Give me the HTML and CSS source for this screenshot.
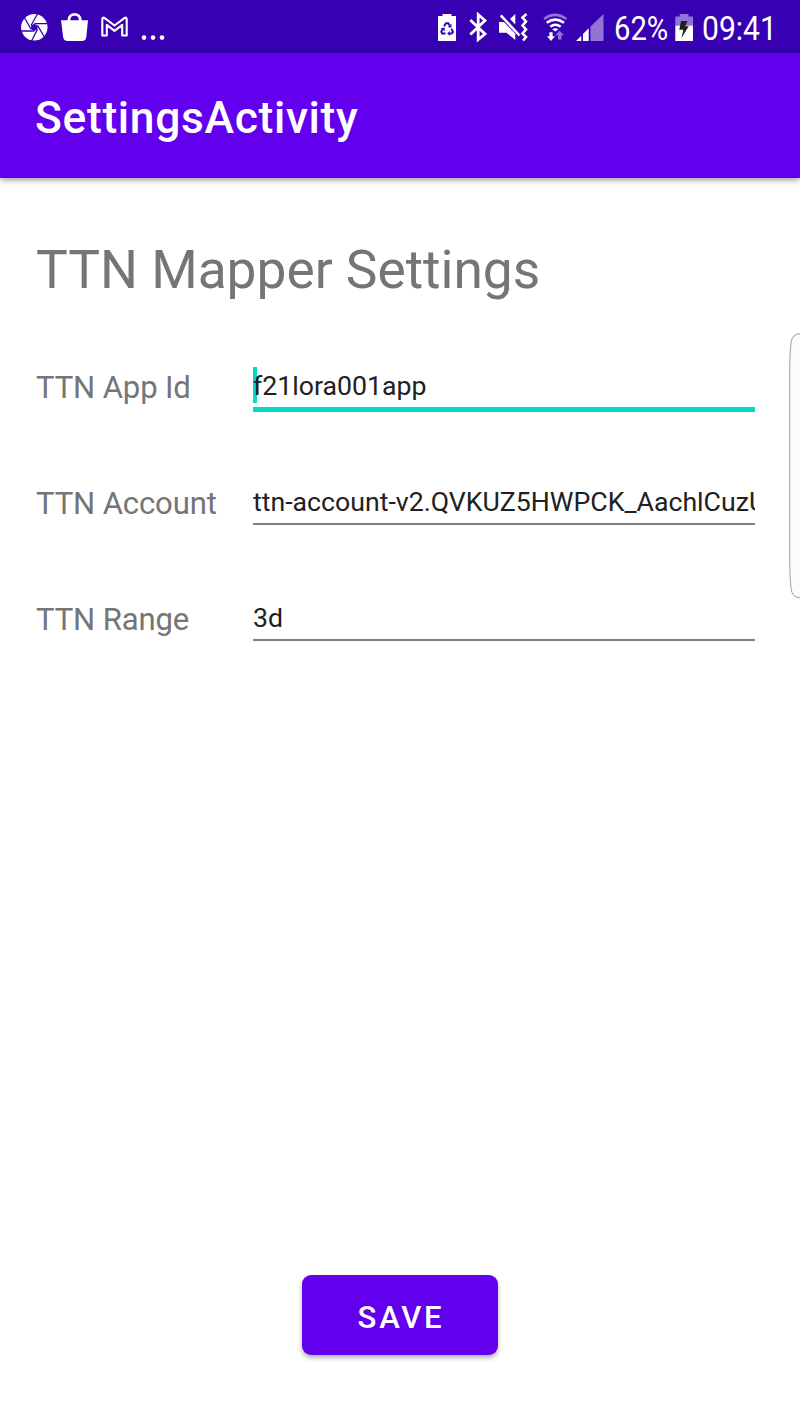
FILE: index.html
```html
<!DOCTYPE html>
<html lang="en">
<head>
<meta charset="utf-8">
<title>SettingsActivity</title>
<link rel="stylesheet" href="styles.css">
</head>
<body>
<div class="screen">
  <header class="status">
    <svg class="tray" width="180" height="53" viewBox="0 0 180 53">
      <circle cx="34.3" cy="27.3" r="13.2" fill="#fff"/>
      <g stroke="#3700b3" stroke-width="1.3" fill="#3700b3">
        <path d="M34.3 23.8L37.5 25.5V29.2L34.3 31L31.1 29.2V25.5Z" stroke="none"/>
        <path d="M31 25.5L38 13M34.3 23.6H48M37.5 25.3L45 38M37.5 29.4L31 42M34.3 31H20M31 29.3L23.5 16"/>
      </g>
      <path d="M61 20.3H88L86.3 37Q85.8 41 82 41H67.5Q63.7 41 63.1 37Z" fill="#fff"/>
      <path d="M69 22V19.5A5.6 5.2 0 0 1 80.2 19.5V22" fill="none" stroke="#fff" stroke-width="2.8"/>
      <path d="M102.3 35.5V19.5Q102.3 16.5 105 18.3L114.5 25.5L124 18.3Q126.7 16.5 126.7 19.5V35.5H122.2V24.8L114.5 30.8L106.8 24.8V35.5Z" fill="none" stroke="#fff" stroke-width="2.1" stroke-linejoin="round"/>
      <g fill="#fff"><circle cx="144" cy="37.6" r="2.3"/><circle cx="153" cy="37.6" r="2.3"/><circle cx="162" cy="37.6" r="2.3"/></g>
    </svg>
    <svg class="signals" width="180" height="53" viewBox="430 0 180 53">
      <path d="M438 16H442.5V14H451.5V16H456V41H438Z" fill="#fff"/>
      <path d="M444 26.3L446 23.3H448.3L449.7 25.6M451.3 28.6L453 31.8L451.7 33.5H449.3M445.5 33.5H442.2L441.3 31.7L442.6 29.3" fill="none" stroke="#3700b3" stroke-width="2"/>
      <path d="M447.7 27.3L451.6 27.5L451.4 23.8ZM449.8 31V36L447.2 33.5ZM440.4 28.5L444.5 27.5L445 31Z" fill="#3700b3"/>
      <path d="M470.3 20L485 34L478.2 39.5V14.5L485 20.5L470.3 34.5" fill="none" stroke="#fff" stroke-width="2.8"/>
      <path d="M499 22H504L515.3 33.8V40L506.5 32.8H499ZM510 19L515.3 14V24.5Z" fill="#fff"/>
      <path d="M500.8 15.4L519.5 35.5" stroke="#fff" stroke-width="2.5"/>
      <path d="M526.5 14L522.5 17.5L526 21.5L522.5 25.5L526 29.5L522.5 33.5L526 37L523 40.5" fill="none" stroke="#fff" stroke-width="2.6"/>
      <g fill="none" stroke-width="2.5">
        <path d="M544 19Q555 10.7 566.3 19" stroke="#9273d6"/>
        <path d="M546.7 22.8Q555.3 16.4 564 22.8M550.2 26.8Q555.3 22.8 560.7 26.8" stroke="#fff"/>
      </g>
      <path d="M552.2 29.2Q555.3 27.2 558.4 29.2L555.3 31.5ZM549.4 32.3H552.6V36.2H555L551 41L547 36.2H549.4Z" fill="#fff"/>
      <path d="M558 39.5V35.2H555.2L559.5 30.8L564 35.2H561.5V39.5Z" fill="#9273d6"/>
      <path d="M576 41L581.3 35.8V41ZM583 41V34L588.7 28.3V41Z" fill="#fff"/>
      <path d="M590.5 41V26.5L603.5 14V41Z" fill="#9273d6"/>
    </svg>
    <span class="condensed percent">62%</span>
    <svg class="battery" width="18" height="53" viewBox="675 0 18 53">
      <path d="M675.3 25.5V16.5H679.7V14H688.5V16.5H693V25.5Z" fill="#9273d6"/>
      <path d="M675.3 25.5H693V41H675.3Z" fill="#fff"/>
      <path d="M681 21H687.5L685.3 26.2H688.7L681.5 38L683.3 29.7H679.3Z" fill="#212121"/>
    </svg>
    <span class="condensed clock">09:41</span>
  </header>
  <div class="appbar"><h1 class="title">SettingsActivity</h1></div>
  <main class="content">
    <h2 class="heading">TTN Mapper Settings</h2>
    <div class="row"><span class="label">TTN App Id</span><div class="field focused"><span class="cursor"></span><span class="value value-app">f21lora001app</span></div></div>
    <div class="row"><span class="label">TTN Account</span><div class="field"><span class="value value-account">ttn-account-v2.QVKUZ5HWPCK_AachlCuzU</span></div></div>
    <div class="row"><span class="label">TTN Range</span><div class="field"><span class="value">3d</span></div></div>
    <button class="save">SAVE</button>
  </main>
  <svg class="edge" width="12" height="268" viewBox="788 332 12 268">
    <path d="M801 333.5Q792 333.5 791 343Q789.7 355 789.7 375V557Q789.7 577 791 588Q792 598 801 598" fill="#fcfcfc" stroke="#a0a0a0" stroke-width="1"/>
  </svg>
</div>
</body>
</html>
```
FILE: styles.css
```css
* { box-sizing: border-box; }
body { margin: 0; background: #fff; font-family: Roboto, "Liberation Sans", sans-serif; }
.screen { position: relative; width: 800px; height: 1422px; overflow: hidden; display: flex; flex-direction: column; background: #fff; }
.status { height: 53px; flex: none; display: flex; background: #3700b3; color: #fff; }
.status svg { display: block; flex: none; }
.signals { margin-left: 250px; }
.condensed { font-size: 34px; line-height: 57px; height: 53px; white-space: nowrap; transform-origin: 0 50%; transform: scaleX(0.86); }
.percent { width: 61px; margin-left: 4px; }
.clock { margin-left: 9px; transform: scaleX(0.885); }
.appbar { height: 125px; flex: none; padding: 39px 36px 0 35px; background: #6200ee; box-shadow: 0 2px 6px rgba(0,0,0,.4); }
.title { margin: 0; color: #fff; font-size: 44.4px; line-height: 52px; font-weight: 500; letter-spacing: .66px; white-space: nowrap; }
.content { flex: 1; display: flex; flex-direction: column; padding: 61px 45px 67px 36px; }
.heading { margin: 0 0 55px; color: #757575; font-size: 53.3px; line-height: 62px; font-weight: 400; letter-spacing: -.03px; white-space: nowrap; }
.row { display: flex; height: 56px; margin-bottom: 60px; }
.label { width: 217px; flex: none; color: #757575; font-size: 31.1px; line-height: 64px; letter-spacing: -.14px; white-space: nowrap; }
.field { position: relative; flex: 1; min-width: 0; height: 56px; }
.field::after { content: ""; position: absolute; left: 0; right: 0; top: 51px; height: 2px; background: #808080; }
.focused::after { height: 5px; background: #03dac5; }
.value { display: block; overflow: hidden; color: #212121; font-size: 26.7px; line-height: 60px; white-space: nowrap; }
.cursor { position: absolute; left: 0; top: 11px; width: 4px; height: 36px; background: #03dac5; }
.value-app { position: relative; }
.save { align-self: center; margin: auto 0 0 9px; width: 196px; height: 80px; padding: 6px 0 0 2px; border: 0; border-radius: 9px; background: #6200ee; color: #fff; font: 500 31.1px/40px Roboto, sans-serif; letter-spacing: 2.77px; box-shadow: 0 3px 5px rgba(0,0,0,.3); }
.edge { position: absolute; right: 0; top: 332px; }
```
